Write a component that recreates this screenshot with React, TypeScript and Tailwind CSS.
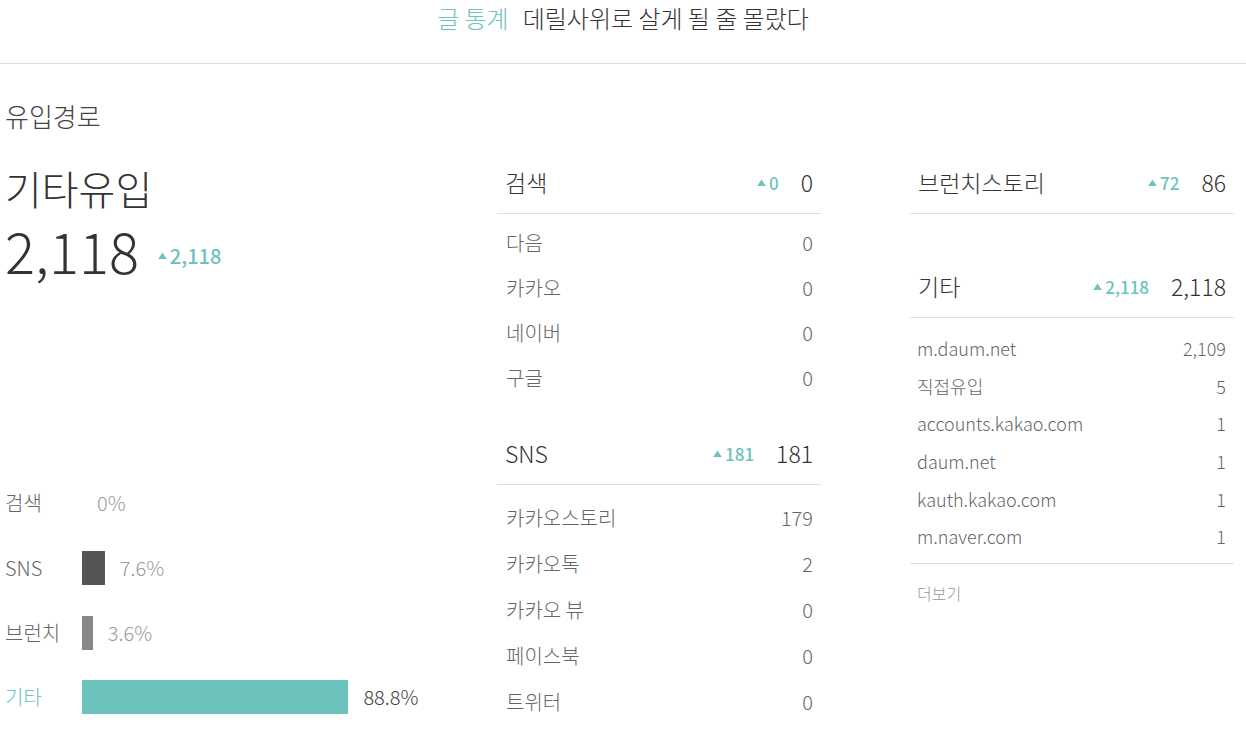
import React from 'react';

const FONT = '"Noto Sans CJK KR", "Noto Sans", sans-serif';

type Row = { label: string; value: string };

const search: Row[] = [
  { label: '다음', value: '0' },
  { label: '카카오', value: '0' },
  { label: '네이버', value: '0' },
  { label: '구글', value: '0' },
];

const sns: Row[] = [
  { label: '카카오스토리', value: '179' },
  { label: '카카오톡', value: '2' },
  { label: '카카오 뷰', value: '0' },
  { label: '페이스북', value: '0' },
  { label: '트위터', value: '0' },
];

const etc: Row[] = [
  { label: 'm.daum.net', value: '2,109' },
  { label: '직접유입', value: '5' },
  { label: 'accounts.kakao.com', value: '1' },
  { label: 'daum.net', value: '1' },
  { label: 'kauth.kakao.com', value: '1' },
  { label: 'm.naver.com', value: '1' },
];

const bars = [
  { label: '검색', pct: 0, text: '0%', color: 'bg-[#555]', active: false },
  { label: 'SNS', pct: 7.6, text: '7.6%', color: 'bg-[#555555]', active: false },
  { label: '브런치', pct: 3.6, text: '3.6%', color: 'bg-[#888888]', active: false },
  { label: '기타', pct: 88.8, text: '88.8%', color: 'bg-[#6cc3bc]', active: true },
];

function Up({ n, big = false }: { n: string; big?: boolean }) {
  return (
    <span className={`flex items-center gap-[3px] font-medium text-[#6cc3bc] ${big ? 'text-[20px]' : 'text-[17px]'}`}>
      <svg width="9" height="7" viewBox="0 0 9 7" className="mb-[1px]">
        <path d="M4.5 0.5 L8.8 7 L0.2 7 Z" fill="#6cc3bc" />
      </svg>
      {n}
    </span>
  );
}

function GroupHead({ title, up, total }: { title: string; up: string; total: string }) {
  return (
    <div className="flex h-[62px] items-center justify-between border-b border-[#dddddd] pl-[8px] pr-[8px]">
      <span className="text-[23px] font-light text-[#333]">{title}</span>
      <span className="flex items-center gap-[22px]">
        <Up n={up} />
        <span className="text-[23px] font-light text-[#333]">{total}</span>
      </span>
    </div>
  );
}

function List({ rows, h, size, pl }: { rows: Row[]; h: string; size: string; pl: string }) {
  return (
    <ul>
      {rows.map((r) => (
        <li key={r.label} className={`flex items-center justify-between pr-[8px] ${pl} ${h} ${size} font-light text-[#666]`}>
          <span>{r.label}</span>
          <span>{r.value}</span>
        </li>
      ))}
    </ul>
  );
}

export default function App() {
  return (
    <div className="min-h-[744px] bg-white text-[#333]" style={{ fontFamily: FONT }}>
      <header className="flex h-[64px] justify-center border-b border-[#dddddd] pt-[2px]">
        <h1 className="text-[24px] font-light leading-[32px]">
          <span className="text-[#6cc3bc]">글 통계</span>
          <span className="ml-[14px] text-[#333]">데릴사위로 살게 될 줄 몰랐다</span>
        </h1>
      </header>

      <div className="flex px-[5px] pt-[35px]">
        {/* left: summary + bars */}
        <section className="flex w-[492px] flex-col">
          <h2 className="text-[26px] font-light leading-[34px] text-[#444]">유입경로</h2>
          <p className="mt-[31px] text-[40px] font-light leading-[48px] text-[#333]">기타유입</p>
          <div className="mt-[6px] flex items-end gap-[19px]">
            <span className="text-[56px] font-light leading-[64px] text-[#333]">2,118</span>
            <span className="mb-[11px]"><Up n="2,118" big /></span>
          </div>

          <div className="mt-[189px] flex flex-col">
            {bars.map((b) => (
              <div key={b.label} className="flex h-[64.7px] items-center">
                <span className={`w-[77px] text-[20px] font-light ${b.active ? 'text-[#6cc3bc]' : 'text-[#666]'}`}>
                  {b.label}
                </span>
                <div className={`h-[34px] ${b.color}`} style={{ width: `${b.pct * 3}px` }} />
                <span className={`ml-[15px] text-[20px] font-light ${b.active ? 'text-[#444]' : 'text-[#999]'}`}>
                  {b.text}
                </span>
              </div>
            ))}
          </div>
        </section>

        {/* middle: 검색 / SNS */}
        <section className="w-[324px] pt-[53px]">
          <GroupHead title="검색" up="0" total="0" />
          <div className="pt-[6px]">
            <List rows={search} h="h-[45px]" size="text-[20px]" pl="pl-[9px]" />
          </div>
          <div className="mt-[23px]">
            <GroupHead title="SNS" up="181" total="181" />
          </div>
          <div className="pt-[10px]">
            <List rows={sns} h="h-[46px]" size="text-[20px]" pl="pl-[9px]" />
          </div>
        </section>

        {/* right: 브런치스토리 / 기타 */}
        <section className="ml-[89px] w-[324px] pt-[53px]">
          <GroupHead title="브런치스토리" up="72" total="86" />
          <div className="mt-[42px]">
            <GroupHead title="기타" up="2,118" total="2,118" />
          </div>
          <div className="border-b border-[#dddddd] pb-[7px] pt-[12px]">
            <List rows={etc} h="h-[37.6px]" size="text-[18px]" pl="pl-[7px]" />
          </div>
          <p className="pl-[7px] pt-[17px] text-[16px] font-light text-[#999]">더보기</p>
        </section>
      </div>
    </div>
  );
}
